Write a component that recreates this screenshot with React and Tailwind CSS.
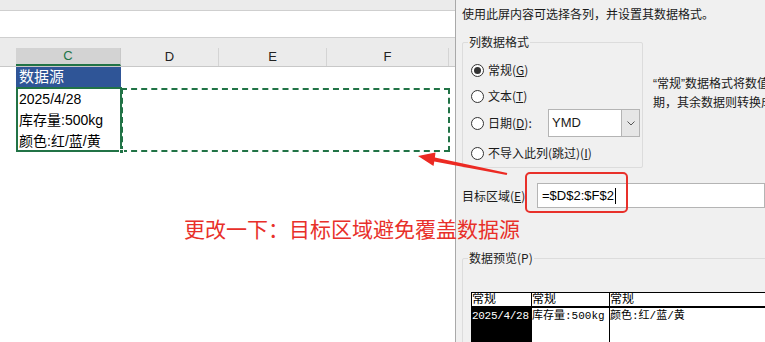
import React from 'react';

const cjk = { fontFamily: '"Liberation Sans", "Noto Sans CJK SC", sans-serif' };
const ui = { fontFamily: '"Noto Sans CJK SC", "Liberation Sans", sans-serif' };
const mono = { fontFamily: '"Liberation Mono", "Noto Sans CJK SC", monospace' };

const Radio = ({ checked }) => (
  <span className="w-[13px] h-[13px] rounded-full border border-[#333] bg-white flex items-center justify-center shrink-0">
    {checked && <span className="w-[7px] h-[7px] rounded-full bg-[#333]" />}
  </span>
);

const GroupBox = ({ label, className, children }) => (
  <div className={`relative border border-[#dcdcdc] rounded-[2px] ${className}`}>
    <span className="absolute -top-[9px] left-[5px] px-[1px] bg-[#f0f0f0] text-[12px] leading-[16px] text-[#222]">{label}</span>
    {children}
  </div>
);

const Sheet = () => {
  const cols = [
    { name: 'D', w: 'w-[98px]' },
    { name: 'E', w: 'w-[108px]' },
    { name: 'F', w: 'w-[122px]' },
  ];
  return (
    <div className="w-[455px] shrink-0 flex flex-col bg-white" style={cjk}>
      <div className="h-[11px] bg-[#ebebeb] border-b border-[#cfcfcf]" />
      <div className="h-[27px] bg-white border-b border-[#cfcfcf]" />
      <div className="h-[10px] bg-[#ebebeb]" />
      <div className="h-[19px] flex bg-[#ebebeb] border-b border-[#c8c8c8] text-[13px] text-[#222]">
        <div className="w-[16px]" />
        <div className="w-[105px] bg-[#d3d3d3] text-[#217346] border-b-2 border-[#217346] border-r border-r-[#c8c8c8] flex items-center justify-center">C</div>
        {cols.map(c => (
          <div key={c.name} className={`${c.w} border-r border-[#d4d4d4] flex items-center justify-center`}>{c.name}</div>
        ))}
        <div className="flex-1" />
      </div>
      <div className="flex h-[20px]">
        <div className="w-[16px]" />
        <div className="w-[105px] bg-[#2f5597] text-white text-[15px] leading-[20px] pl-[3px]">数据源</div>
      </div>
      <div className="flex">
        <div className="w-[16px]" />
        <div className="relative w-[106px] h-[65px] border-2 border-[#217346] text-[14px] leading-[21px] text-black pl-[1px] whitespace-nowrap">
          <div>2025/4/28</div>
          <div>库存量:500kg</div>
          <div>颜色:红/蓝/黄</div>
          <span className="absolute -right-[4px] -bottom-[4px] w-[5px] h-[5px] bg-[#217346] border border-white" />
        </div>
        <div className="w-[329px] h-[64px] -ml-[1px] mt-[1px] border-2 border-dashed border-[#217346]" />
      </div>
    </div>
  );
};

const Dialog = () => (
  <div className="flex-1 h-[342px] bg-[#f0f0f0] border-l border-[#a9a9a9] pl-[6px] pt-[6px] overflow-hidden text-[#1a1a1a]" style={ui}>
    <p className="text-[12px] leading-[16px] whitespace-nowrap">使用此屏内容可选择各列，并设置其数据格式。</p>
    <div className="flex mt-[20px]">
      <GroupBox label="列数据格式" className="w-[181px] h-[126px] shrink-0">
        <div className="flex flex-col pt-[14px] pl-[8px] text-[12px]">
          <div className="h-[26px] flex items-center gap-[4px]">
            <Radio checked />
            <span>常规(<span className="underline">G</span>)</span>
          </div>
          <div className="h-[26px] flex items-center gap-[4px]">
            <Radio />
            <span>文本(<span className="underline">T</span>)</span>
          </div>
          <div className="h-[28px] flex items-center gap-[4px]">
            <Radio />
            <span className="w-[56px]">日期(<span className="underline">D</span>):</span>
            <div className="w-[92px] h-[28px] bg-white border border-[#b4b4b4] flex">
              <span className="flex-1 pl-[3px] text-[13px] leading-[26px]" style={cjk}>YMD</span>
              <span className="w-[18px] bg-[#e6e6e6] border-l border-[#b4b4b4] flex items-center justify-center">
                <svg width="8" height="5" viewBox="0 0 8 5"><path d="M0.5 0.5 L4 4 L7.5 0.5" fill="none" stroke="#555" strokeWidth="1" /></svg>
              </span>
            </div>
          </div>
          <div className="h-[26px] mt-[3px] flex items-center gap-[4px]">
            <Radio />
            <span>不导入此列(跳过)(<span className="underline">I</span>)</span>
          </div>
        </div>
      </GroupBox>
      <div className="ml-[10px] mt-[32px] text-[12px] leading-[17px] whitespace-nowrap">
        <div><span style={cjk}>“</span>常规<span style={cjk}>”</span>数据格式将数值转换成数字，日期值会转换成日</div>
        <div>期，其余数据则转换成文本。</div>
      </div>
    </div>
    <div className="relative flex items-center mt-[15px] h-[25px]">
      <span className="w-[75px] shrink-0 text-[12px]">目标区域(<span className="underline">E</span>)</span>
      <div className="flex-1 h-[25px] bg-white border border-[#b4b4b4] flex items-center pl-[4px] text-[13px] text-black" style={cjk}>
        =$D$2:$F$2<span className="w-[1px] h-[16px] bg-black ml-[1px]" />
      </div>
      <span className="absolute left-[63px] -top-[11px] w-[103px] h-[41px] border-2 border-[#e8302a] rounded-[5px]" />
    </div>
    <GroupBox label="数据预览(P)" className="mt-[50px] h-[120px] -mr-[4px]">
      <div className="ml-[8px] mt-[33px] bg-white border-t border-l border-black text-[12px] leading-[15px] text-black" style={mono}>
        <div className="flex h-[15px] border-b-2 border-black overflow-hidden">
          <span className="w-[60px] border-r border-black">常规</span>
          <span className="w-[78px] border-r border-black">常规</span>
          <span className="flex-1">常规</span>
        </div>
        <div className="flex h-[40px] whitespace-nowrap text-[11px]">
          <span className="w-[60px] bg-black text-white border-r border-black pt-[1px] overflow-hidden tracking-[-0.3px]">2025/4/28</span>
          <span className="w-[78px] border-r border-black pt-[1px] overflow-hidden">库存量:500kg</span>
          <span className="flex-1 pt-[1px]">颜色:红/蓝/黄</span>
        </div>
      </div>
    </GroupBox>
  </div>
);

export default function App() {
  return (
    <div className="relative w-[765px] h-[342px] overflow-hidden flex">
      <Sheet />
      <Dialog />
      <span className="absolute left-[184px] top-[217px] text-[21px] leading-[22px] text-[#e8302a] whitespace-nowrap" style={ui}>
        更改一下：目标区域避免覆盖数据源
      </span>
      <svg className="absolute left-0 top-0 pointer-events-none" width="765" height="342">
        <polygon points="418,156 435.5,152.6 434.9,157.6 507.3,173 506.7,175 434.3,161.4 433.5,166" fill="#ec2a23" />
      </svg>
    </div>
  );
}
